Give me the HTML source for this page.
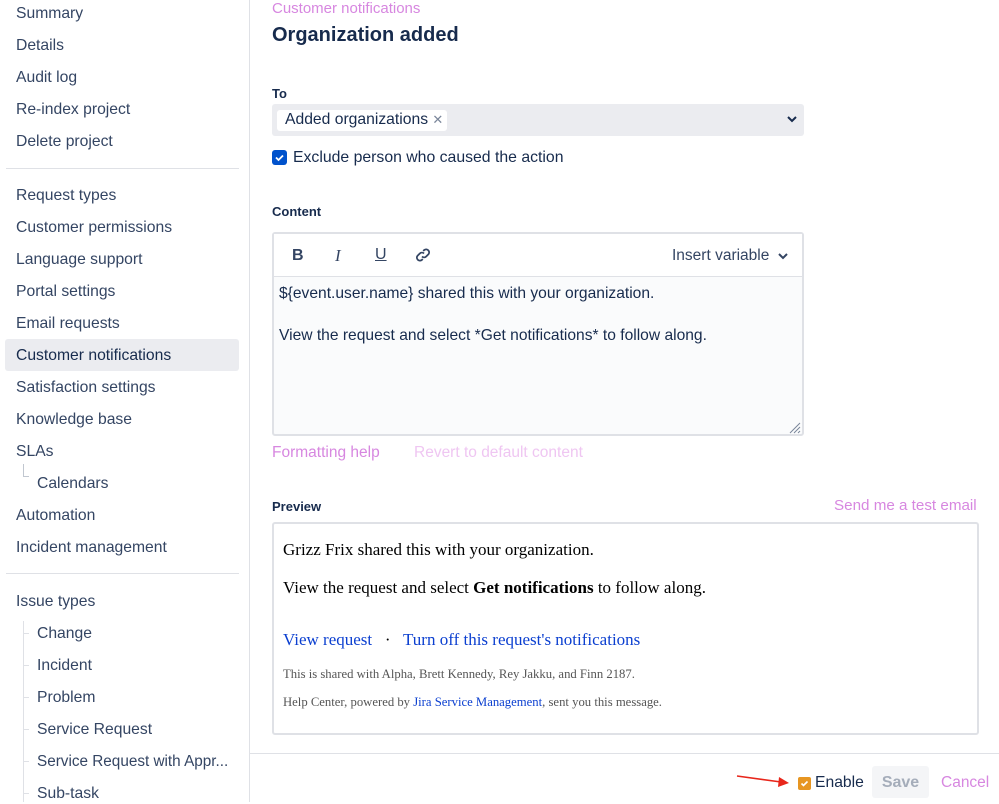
<!DOCTYPE html>
<html><head><meta charset="utf-8"><style>
*{box-sizing:border-box;margin:0;padding:0}
body{width:999px;height:802px;overflow:hidden;background:#fff;font-family:"Liberation Sans",sans-serif;color:#172b4d;position:relative}
.side{position:absolute;left:0;top:0;width:250px;height:802px;border-right:1px solid #dfe1e6}
.it{position:absolute;left:16px;font-size:15.7px;color:#344563;line-height:20px}
.sub{left:37px}
.hr{position:absolute;left:6px;width:233px;height:1px;background:#dfe1e6}
.sel{position:absolute;left:5px;top:339px;width:234px;height:32px;background:#ebecf0;border-radius:3px}
.a{position:absolute}
.lbl{font-size:13px;font-weight:bold;color:#172b4d}
.pink{color:#d787e0}
.serif{font-family:"Liberation Serif",serif;color:#000}
.blue{color:#0b3fd0}
</style></head><body>
<div class="side">
<div class="sel"></div>
<div class="it" style="top:4px">Summary</div>
<div class="it" style="top:36px">Details</div>
<div class="it" style="top:68px">Audit log</div>
<div class="it" style="top:100px">Re-index project</div>
<div class="it" style="top:132px">Delete project</div>
<div class="hr" style="top:168px"></div>
<div class="it" style="top:186px">Request types</div>
<div class="it" style="top:218px">Customer permissions</div>
<div class="it" style="top:250px">Language support</div>
<div class="it" style="top:282px">Portal settings</div>
<div class="it" style="top:314px">Email requests</div>
<div class="it" style="top:346px;color:#172b4d">Customer notifications</div>
<div class="it" style="top:378px">Satisfaction settings</div>
<div class="it" style="top:410px">Knowledge base</div>
<div class="it" style="top:442px">SLAs</div>
<div class="a" style="left:23px;top:464px;width:6px;height:13px;border-left:1px solid #c1c7d0;border-bottom:1px solid #c1c7d0"></div>
<div class="it sub" style="top:474px">Calendars</div>
<div class="it" style="top:506px">Automation</div>
<div class="it" style="top:538px">Incident management</div>
<div class="hr" style="top:573px"></div>
<div class="it" style="top:592px">Issue types</div>
<div class="a" style="left:23px;top:621px;width:1px;height:181px;background:#dfe1e6"></div>
<div class="a" style="left:24px;top:633px;width:5px;height:1px;background:#dfe1e6"></div>
<div class="a" style="left:24px;top:665px;width:5px;height:1px;background:#dfe1e6"></div>
<div class="a" style="left:24px;top:697px;width:5px;height:1px;background:#dfe1e6"></div>
<div class="a" style="left:24px;top:729px;width:5px;height:1px;background:#dfe1e6"></div>
<div class="a" style="left:24px;top:761px;width:5px;height:1px;background:#dfe1e6"></div>
<div class="a" style="left:24px;top:793px;width:5px;height:1px;background:#dfe1e6"></div>
<div class="it sub" style="top:624px">Change</div>
<div class="it sub" style="top:656px">Incident</div>
<div class="it sub" style="top:688px">Problem</div>
<div class="it sub" style="top:720px">Service Request</div>
<div class="it sub" style="top:752px;font-size:15.3px">Service Request with Appr...</div>
<div class="it sub" style="top:784px">Sub-task</div>
</div>

<div class="a pink" style="left:272px;top:0px;font-size:15px">Customer notifications</div>
<div class="a" style="left:272px;top:24px;font-size:20px;font-weight:bold;color:#172b4d">Organization added</div>
<div class="a lbl" style="left:272px;top:86px">To</div>
<div class="a" style="left:272px;top:104px;width:532px;height:32px;background:#ebecf0;border-radius:3px"></div>
<div class="a" style="left:277px;top:110px;width:170px;height:21px;background:#fff;border-radius:3px;font-size:15.7px;padding:1px 0 0 8px;color:#172b4d;white-space:nowrap">Added organizations <span style="color:#7a869a;font-size:13px">✕</span></div>
<svg class="a" style="left:786px;top:114px" width="12" height="10"><path d="M2 3l4 4 4-4" stroke="#172b4d" stroke-width="2" fill="none"/></svg>
<div class="a" style="left:272px;top:150px;width:15px;height:15px;background:#0052cc;border-radius:3px"></div>
<svg class="a" style="left:272px;top:150px" width="15" height="15"><path d="M4 7.5l2.5 2.5 4.5-4.5" stroke="#fff" stroke-width="1.8" fill="none"/></svg>
<div class="a" style="left:293px;top:149px;font-size:15.8px">Exclude person who caused the action</div>

<div class="a lbl" style="left:272px;top:204px">Content</div>
<div class="a" style="left:272px;top:232px;width:532px;height:204px;border:2px solid #dfe1e6;border-radius:3px;background:#fafbfc"></div>
<div class="a" style="left:274px;top:234px;width:528px;height:43px;background:#fff;border-bottom:1px solid #dfe1e6"></div>
<div class="a" style="left:292px;top:247px;font-size:16px;font-weight:bold;color:#344563">B</div>
<div class="a" style="left:335px;top:246px;font-size:17px;font-style:italic;font-family:'Liberation Serif',serif;color:#344563">I</div>
<div class="a" style="left:375px;top:246px;font-size:16px;text-decoration:underline;color:#344563">U</div>
<svg class="a" style="left:414px;top:246px" width="18" height="18" fill="none" stroke="#344563" stroke-width="1.8"><path d="M8 10.5a3 3 0 004.2 0l2.3-2.3a3 3 0 00-4.2-4.2L9.2 5"/><path d="M10 7.5a3 3 0 00-4.2 0L3.5 9.8A3 3 0 007.7 14l1.1-1"/></svg>
<div class="a" style="left:672px;top:247px;font-size:15.5px;color:#344563">Insert variable</div>
<svg class="a" style="left:777px;top:251px" width="12" height="10"><path d="M2 3l4 4 4-4" stroke="#344563" stroke-width="2" fill="none"/></svg>
<div class="a" style="left:279px;top:285px;font-size:15.6px;color:#172b4d">${event.user.name} shared this with your organization.</div>
<div class="a" style="left:279px;top:327px;font-size:15.6px;color:#172b4d">View the request and select *Get notifications* to follow along.</div>
<svg class="a" style="left:788px;top:421px" width="13" height="13" stroke="#7a869a" stroke-width="1"><path d="M12 2L2 12M12 6L6 12M12 10L10 12"/></svg>
<div class="a pink" style="left:272px;top:444px;font-size:15.5px">Formatting help</div>
<div class="a" style="left:414px;top:444px;font-size:15.5px;color:#efc6f2">Revert to default content</div>

<div class="a lbl" style="left:272px;top:499px">Preview</div>
<div class="a pink" style="left:834px;top:497px;font-size:15.2px">Send me a test email</div>
<div class="a" style="left:272px;top:522px;width:707px;height:213px;border:2px solid #dfe1e6;border-radius:3px"></div>
<div class="a serif" style="left:283px;top:540px;font-size:17px">Grizz Frix shared this with your organization.</div>
<div class="a serif" style="left:283px;top:578px;font-size:17px">View the request and select <b>Get notifications</b> to follow along.</div>
<div class="a serif" style="left:283px;top:630px;font-size:17px"><span class="blue">View request</span> &nbsp; · &nbsp; <span class="blue">Turn off this request's notifications</span></div>
<div class="a serif" style="left:283px;top:667px;font-size:12.7px;color:#555">This is shared with Alpha, Brett Kennedy, Rey Jakku, and Finn 2187.</div>
<div class="a serif" style="left:283px;top:695px;font-size:12.7px;color:#555">Help Center, powered by <span class="blue">Jira Service Management</span>, sent you this message.</div>

<div class="a" style="left:250px;top:753px;width:749px;height:1px;background:#dfe1e6"></div>
<svg class="a" style="left:735px;top:772px" width="56" height="16"><path d="M2 4L46 10" stroke="#e8261b" stroke-width="1.6"/><path d="M54 11l-10-6 -1 10z" fill="#e8261b"/></svg>
<div class="a" style="left:798px;top:777px;width:13px;height:13px;background:#e79622;border-radius:2px"></div>
<svg class="a" style="left:798px;top:777px" width="13" height="13"><path d="M3.5 6.5l2 2 4-4" stroke="#fff" stroke-width="1.6" fill="none"/></svg>
<div class="a" style="left:815px;top:774px;font-size:15.7px;color:#172b4d">Enable</div>
<div class="a" style="left:872px;top:766px;width:57px;height:32px;background:#f4f5f7;border-radius:3px;font-size:16px;font-weight:bold;color:#a5adba;text-align:center;line-height:33px">Save</div>
<div class="a pink" style="left:941px;top:774px;font-size:15.5px">Cancel</div>
</body></html>
